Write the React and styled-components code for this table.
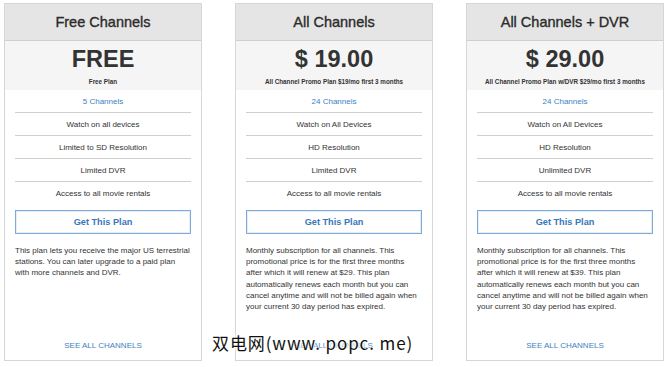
import React from "react";
import styled, { createGlobalStyle } from "styled-components";

const Global = createGlobalStyle`
  html, body { margin: 0; padding: 0; background: #fff; }
  body { font-family: "Liberation Sans", Arial, sans-serif; color: #333; }
  * { box-sizing: border-box; }
`;

const Page = styled.div`
  position: relative;
  width: 670px;
  height: 367px;
  padding: 3px 6px 0 4px;
`;

const Grid = styled.div`
  display: grid;
  grid-template-columns: repeat(3, 198px);
  column-gap: 33px;
`;

const Card = styled.div`
  height: 358px;
  border: 1px solid #d6d6d6;
  display: flex;
  flex-direction: column;
  background: #fff;
`;

const Header = styled.div`
  height: 37px;
  background: #e5e5e5;
  border-bottom: 1px solid #cfcfcf;
  display: flex;
  align-items: center;
  justify-content: center;
  font-size: 14.5px;
  color: #2b2b2b;
  -webkit-text-stroke: 0.35px #2b2b2b;
`;

const PriceBox = styled.div`
  height: 49px;
  background: #f5f5f5;
  display: flex;
  flex-direction: column;
  align-items: center;
  padding-top: 4px;
`;

const Price = styled.div`
  font-size: 23.5px;
  font-weight: bold;
  line-height: 28px;
  color: #333;
`;

const Sub = styled.div`
  font-size: 6.3px;
  font-weight: bold;
  line-height: 8px;
  margin-top: 5px;
  color: #333;
`;

const List = styled.ul`
  list-style: none;
  margin: 0 10px;
  padding: 0;
`;

const Item = styled.li`
  height: 23px;
  display: flex;
  align-items: center;
  justify-content: center;
  font-size: 8px;
  color: ${p => (p.$blue ? "#3d7fc1" : "#333")};
  border-bottom: ${p => (p.$last ? "none" : "1px solid #cfcfcf")};
`;

const Button = styled.button`
  margin: 5px 10px 0;
  height: 24px;
  border: 1px solid #7eaada;
  box-shadow: inset 0 0 0 1px #e4eef9;
  background: #fff;
  color: #3a77b8;
  font-family: "Liberation Sans", Arial, sans-serif;
  font-weight: bold;
  font-size: 9.2px;
  padding: 0;
`;

const Desc = styled.p`
  margin: 11px 10px 0;
  font-size: 8px;
  line-height: 11.2px;
  color: #333;
`;

const Link = styled.a`
  margin-top: auto;
  margin-bottom: 9px;
  text-align: center;
  font-size: 8px;
  color: #3d7fc1;
  text-decoration: none;
  line-height: 10px;
`;

const Watermark = styled.div`
  position: absolute;
  left: 212px;
  top: 331px;
  font-family: "Noto Sans CJK SC", sans-serif;
  font-size: 17px;
  letter-spacing: 0.9px;
  line-height: 24px;
  color: #111;
  white-space: nowrap;
  text-shadow: 0 0 2px #fff, 0 0 3px #fff, 0 0 4px #fff, 0 0 5px #fff;
`;

const plans = [
  {
    title: "Free Channels",
    price: "FREE",
    sub: "Free Plan",
    channels: "5 Channels",
    features: ["Watch on all devices", "Limited to SD Resolution", "Limited DVR", "Access to all movie rentals"],
    desc: "This plan lets you receive the major US terrestrial stations. You can later upgrade to a paid plan with more channels and DVR.",
  },
  {
    title: "All Channels",
    price: "$ 19.00",
    sub: "All Channel Promo Plan $19/mo first 3 months",
    channels: "24 Channels",
    features: ["Watch on All Devices", "HD Resolution", "Limited DVR", "Access to all movie rentals"],
    desc: "Monthly subscription for all channels. This promotional price is for the first three months after which it will renew at $29. This plan automatically renews each month but you can cancel anytime and will not be billed again when your current 30 day period has expired.",
  },
  {
    title: "All Channels + DVR",
    price: "$ 29.00",
    sub: "All Channel Promo Plan w/DVR $29/mo first 3 months",
    channels: "24 Channels",
    features: ["Watch on All Devices", "HD Resolution", "Unlimited DVR", "Access to all movie rentals"],
    desc: "Monthly subscription for all channels. This promotional price is for the first three months after which it will renew at $39. This plan automatically renews each month but you can cancel anytime and will not be billed again when your current 30 day period has expired.",
  },
];

export default function App() {
  return (
    <Page>
      <Global />
      <Grid>
        {plans.map(p => (
          <Card key={p.title}>
            <Header>{p.title}</Header>
            <PriceBox>
              <Price>{p.price}</Price>
              <Sub>{p.sub}</Sub>
            </PriceBox>
            <List>
              <Item $blue>{p.channels}</Item>
              {p.features.map((f, i) => (
                <Item key={f} $last={i === p.features.length - 1}>{f}</Item>
              ))}
            </List>
            <Button>Get This Plan</Button>
            <Desc>{p.desc}</Desc>
            <Link href="#">SEE ALL CHANNELS</Link>
          </Card>
        ))}
      </Grid>
      <Watermark>双电网(www. popc. me)</Watermark>
    </Page>
  );
}
